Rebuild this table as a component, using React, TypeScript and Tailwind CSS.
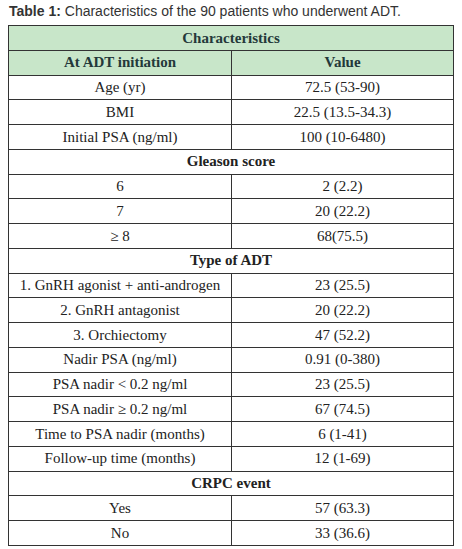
const rows: { kind: "section" | "row"; a: string; b?: string }[] = [
  { kind: "row", a: "Age (yr)", b: "72.5 (53-90)" },
  { kind: "row", a: "BMI", b: "22.5 (13.5-34.3)" },
  { kind: "row", a: "Initial PSA (ng/ml)", b: "100 (10-6480)" },
  { kind: "section", a: "Gleason score" },
  { kind: "row", a: "6", b: "2 (2.2)" },
  { kind: "row", a: "7", b: "20 (22.2)" },
  { kind: "row", a: "≥ 8", b: "68(75.5)" },
  { kind: "section", a: "Type of ADT" },
  { kind: "row", a: "1. GnRH agonist + anti-androgen", b: "23 (25.5)" },
  { kind: "row", a: "2. GnRH antagonist", b: "20 (22.2)" },
  { kind: "row", a: "3. Orchiectomy", b: "47 (52.2)" },
  { kind: "row", a: "Nadir PSA (ng/ml)", b: "0.91 (0-380)" },
  { kind: "row", a: "PSA nadir < 0.2 ng/ml", b: "23 (25.5)" },
  { kind: "row", a: "PSA nadir ≥ 0.2 ng/ml", b: "67 (74.5)" },
  { kind: "row", a: "Time to PSA nadir (months)", b: "6 (1-41)" },
  { kind: "row", a: "Follow-up time (months)", b: "12 (1-69)" },
  { kind: "section", a: "CRPC event" },
  { kind: "row", a: "Yes", b: "57 (63.3)" },
  { kind: "row", a: "No", b: "33 (36.6)" },
];

export default function App() {
  return (
    <div className="w-[462px] h-[549px] bg-white overflow-hidden">
      <p className="pl-[9px] pt-[2px] h-[25px] text-[14px] leading-[18px] text-[#333] font-['Liberation_Sans',Arial,sans-serif]">
        <b>Table 1:</b> Characteristics of the 90 patients who underwent ADT.
      </p>
      <table className="ml-[8px] w-[446px] border-collapse font-['Liberation_Serif','Times_New_Roman',serif] text-[15px] text-[#222] table-fixed">
        <colgroup>
          <col className="w-[223px]" />
          <col />
        </colgroup>
        <tbody>
          <tr className="bg-[#c8e6c9]">
            <td colSpan={2} className="h-[24.75px] p-0 border border-[#333] text-center font-bold text-[#24393a]">
              Characteristics
            </td>
          </tr>
          <tr className="bg-[#c8e6c9]">
            <td className="h-[24.75px] p-0 border border-[#333] text-center font-bold text-[#24393a]">At ADT initiation</td>
            <td className="h-[24.75px] p-0 border border-[#333] text-center font-bold text-[#24393a]">Value</td>
          </tr>
          {rows.map((r, i) =>
            r.kind === "section" ? (
              <tr key={i}>
                <td colSpan={2} className="h-[24.75px] p-0 border border-[#333] text-center font-bold">
                  {r.a}
                </td>
              </tr>
            ) : (
              <tr key={i}>
                <td className="h-[24.75px] p-0 border border-[#333] text-center">{r.a}</td>
                <td className="h-[24.75px] p-0 border border-[#333] text-center">{r.b}</td>
              </tr>
            )
          )}
        </tbody>
      </table>
    </div>
  );
}
